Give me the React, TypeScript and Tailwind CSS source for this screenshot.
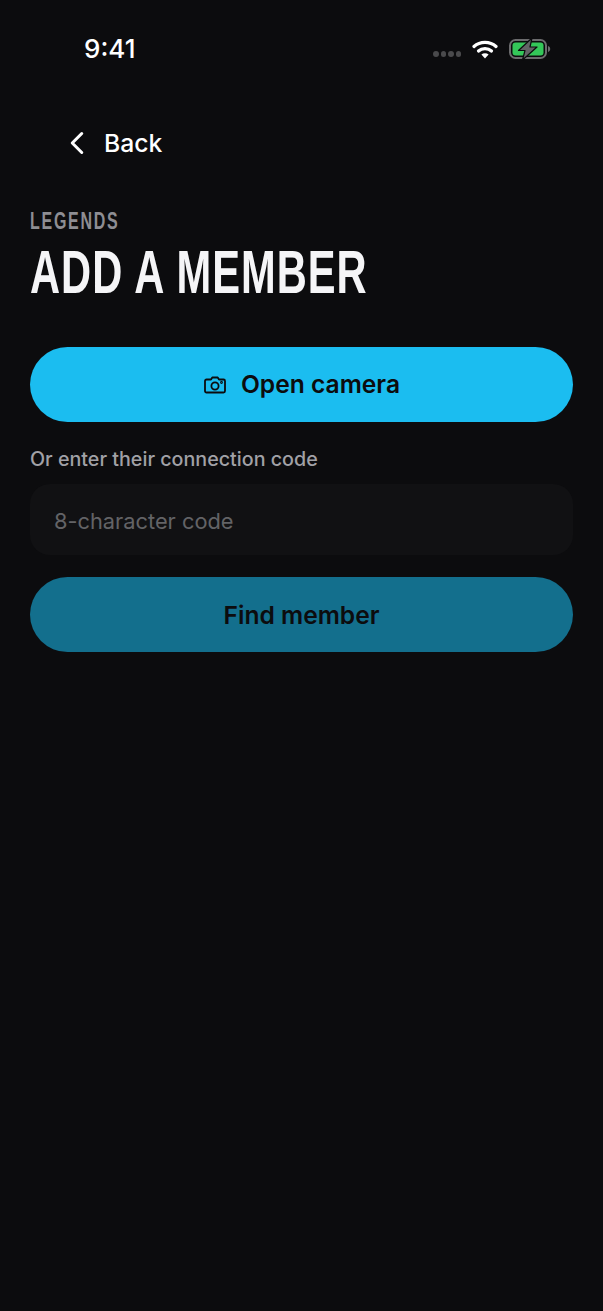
import { ChevronLeft } from 'lucide-react';

function StatusBar() {
  return (
    <div className="flex h-[64px] items-end justify-between pr-[52px] pl-[84px]">
      <span className="text-[26px] leading-[30px] font-medium text-white">9:41</span>
      <div className="mb-[5px] flex items-center">
        <div className="mt-[10px] mr-[11px] flex gap-[2px]">
          <span className="size-[5.5px] rounded-full bg-[#4a4a4c]" />
          <span className="size-[5.5px] rounded-full bg-[#4a4a4c]" />
          <span className="size-[5.5px] rounded-full bg-[#4a4a4c]" />
          <span className="size-[5.5px] rounded-full bg-[#4a4a4c]" />
        </div>
        <svg width="26" height="20" viewBox="0 0 26 20" fill="none" className="mr-[11px]">
          <path d="M2 7.5C8 2 18 2 24 7.5" stroke="#fff" strokeWidth="3.2" strokeLinecap="round" />
          <path d="M6.5 12C10 8.8 16 8.8 19.5 12" stroke="#fff" strokeWidth="3.2" strokeLinecap="round" />
          <path d="M13 19.5L9.4 15.6C11.4 13.9 14.6 13.9 16.6 15.6L13 19.5Z" fill="#fff" />
        </svg>
        <svg width="42" height="20" viewBox="0 0 42 20" fill="none" className="overflow-visible">
          <rect x="1" y="1" width="36" height="18" rx="5.5" stroke="#6b6b6d" strokeWidth="2" />
          <rect x="3.500" y="3.500" width="31" height="13" rx="3" fill="#34c759" />
          <path d="M39 7v6c1.400-.4 2.200-1.600 2.200-3S40.400 7.400 39 7Z" fill="#6b6b6d" />
          <path d="M23 -1L9.500 11.500H16L13.500 21L28 8H21L23 -1Z" fill="#636366" stroke="#0c0c0e" strokeWidth="1.200" strokeLinejoin="round" />
        </svg>
      </div>
    </div>
  );
}

export default function App() {
  return (
    <div className="min-h-[1311px] bg-[#0c0c0e] font-['Inter','Liberation_Sans',sans-serif]">
      <StatusBar />
      <div className="flex items-center gap-[8px] pt-[60px] pl-[58px]">
        <ChevronLeft size={38} strokeWidth={1.9} className="text-white" />
        <span className="text-[24.700px] leading-[36px] font-medium text-white">Back</span>
      </div>
      <div className="px-[30px]">
        <p className="mt-[46px] origin-left scale-x-[0.695] text-[23px] leading-[26px] font-bold tracking-[2.500px] text-[#8e8e93] font-['Liberation_Sans',sans-serif]">LEGENDS</p>
        <h1 className="mt-[5px] origin-left scale-x-[0.672] text-[62px] leading-[66px] font-bold tracking-[1.500px] text-[#f5f5f7] font-['Liberation_Sans',sans-serif]">ADD A MEMBER</h1>
        <button className="mt-[42px] flex h-[75px] w-full items-center justify-center gap-[14px] rounded-full bg-[#1bbdf0] text-[24.600px] font-semibold text-[#0c0c0e]">
          <svg width="24" height="24" viewBox="0 0 24 24" fill="none" stroke="currentColor" strokeWidth="1.800" strokeLinejoin="round">
            <path d="M3.500 6.500H8L9.300 4.500H14.700L16 6.500H20.500A1.500 1.500 0 0 1 22 8V18A1.500 1.500 0 0 1 20.500 19.500H3.500A1.500 1.500 0 0 1 2 18V8A1.500 1.500 0 0 1 3.500 6.500Z" />
            <circle cx="12" cy="13" r="3.600" />
            <circle cx="18.500" cy="9.500" r="0.500" />
          </svg>
          Open camera
        </button>
        <p className="mt-[24px] text-[19.700px] leading-[26px] font-medium text-[#a1a1a6]">Or enter their connection code</p>
        <div className="mt-[12px] flex h-[71px] items-center rounded-[20px] bg-[#111113] px-[24px] pt-[3px] text-[21.800px] text-[#636366]">8-character code</div>
        <button className="mt-[22px] flex h-[75px] w-full items-center justify-center rounded-full bg-[#136f8d] pt-[2px] text-[24.600px] font-semibold text-[#0c0c0e]">
          Find member
        </button>
      </div>
    </div>
  );
}
